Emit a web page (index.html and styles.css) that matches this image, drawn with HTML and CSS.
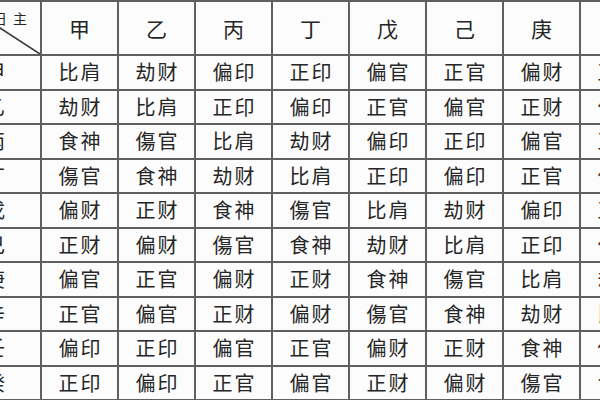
FILE: index.html
```html
<!DOCTYPE html>
<html lang="zh">
<head>
<meta charset="utf-8">
<link rel="stylesheet" href="styles.css">
</head>
<body>
<div class="frame">
  <div class="grid">
    <div class="cell corner">
      <svg class="diag" viewBox="0 0 100 100" preserveAspectRatio="none"><line x1="0" y1="0" x2="100" y2="100" stroke="#3c3c3c" stroke-width="1.6" vector-effect="non-scaling-stroke"/></svg>
      <span class="corner-label">日主</span>
    </div>
    <div class="cell head">甲</div><div class="cell head">乙</div><div class="cell head">丙</div><div class="cell head">丁</div><div class="cell head">戊</div><div class="cell head">己</div><div class="cell head">庚</div><div class="cell head">辛</div>

    <div class="cell side">甲</div><div class="cell">比肩</div><div class="cell">劫财</div><div class="cell">偏印</div><div class="cell">正印</div><div class="cell">偏官</div><div class="cell">正官</div><div class="cell">偏财</div><div class="cell">正财</div>
    <div class="cell side">乙</div><div class="cell">劫财</div><div class="cell">比肩</div><div class="cell">正印</div><div class="cell">偏印</div><div class="cell">正官</div><div class="cell">偏官</div><div class="cell">正财</div><div class="cell">偏财</div>
    <div class="cell side">丙</div><div class="cell">食神</div><div class="cell">傷官</div><div class="cell">比肩</div><div class="cell">劫财</div><div class="cell">偏印</div><div class="cell">正印</div><div class="cell">偏官</div><div class="cell">正官</div>
    <div class="cell side">丁</div><div class="cell">傷官</div><div class="cell">食神</div><div class="cell">劫财</div><div class="cell">比肩</div><div class="cell">正印</div><div class="cell">偏印</div><div class="cell">正官</div><div class="cell">偏官</div>
    <div class="cell side">戊</div><div class="cell">偏财</div><div class="cell">正财</div><div class="cell">食神</div><div class="cell">傷官</div><div class="cell">比肩</div><div class="cell">劫财</div><div class="cell">偏印</div><div class="cell">正印</div>
    <div class="cell side">己</div><div class="cell">正财</div><div class="cell">偏财</div><div class="cell">傷官</div><div class="cell">食神</div><div class="cell">劫财</div><div class="cell">比肩</div><div class="cell">正印</div><div class="cell">偏印</div>
    <div class="cell side">庚</div><div class="cell">偏官</div><div class="cell">正官</div><div class="cell">偏财</div><div class="cell">正财</div><div class="cell">食神</div><div class="cell">傷官</div><div class="cell">比肩</div><div class="cell">劫财</div>
    <div class="cell side">辛</div><div class="cell">正官</div><div class="cell">偏官</div><div class="cell">正财</div><div class="cell">偏财</div><div class="cell">傷官</div><div class="cell">食神</div><div class="cell">劫财</div><div class="cell">比肩</div>
    <div class="cell side">壬</div><div class="cell">偏印</div><div class="cell">正印</div><div class="cell">偏官</div><div class="cell">正官</div><div class="cell">偏财</div><div class="cell">正财</div><div class="cell">食神</div><div class="cell">傷官</div>
    <div class="cell side">癸</div><div class="cell">正印</div><div class="cell">偏印</div><div class="cell">正官</div><div class="cell">偏官</div><div class="cell">正财</div><div class="cell">偏财</div><div class="cell">傷官</div><div class="cell">食神</div>
  </div>
</div>
</body>
</html>
```

FILE: styles.css
```css
html, body {
  margin: 0;
  padding: 0;
  background: #fcfcfc;
}

.frame {
  width: 600px;
  height: 400px;
  overflow: hidden;
  background: #fcfcfc;
}

.grid {
  display: grid;
  grid-template-columns: 80px repeat(8, 75px);
  grid-template-rows: 52px repeat(10, 32.5px);
  gap: 2px;
  padding: 2px 0 2px 0;
  margin-left: -40px;
  width: max-content;
  background: #5f5f5f;
  font-family: "Noto Sans CJK SC", "Noto Sans CJK TC", sans-serif;
  color: #262626;
}

.cell {
  background: #fcfcfc;
  display: flex;
  align-items: center;
  justify-content: center;
  font-size: 20px;
  letter-spacing: 2px;
  padding-left: 2px;
  line-height: 1;
}

.head {
  font-size: 21px;
  letter-spacing: 0;
  padding-left: 0;
}

.side {
  font-size: 20px;
  letter-spacing: 0;
  padding-left: 0;
  padding-right: 10px;
}

.corner {
  position: relative;
  align-items: flex-start;
  justify-content: flex-end;
}

.diag {
  position: absolute;
  left: 0;
  top: 0;
  width: 100%;
  height: 100%;
}

.corner-label {
  font-size: 14px;
  letter-spacing: 6px;
  margin-top: 9px;
  margin-right: 7px;
}
```
